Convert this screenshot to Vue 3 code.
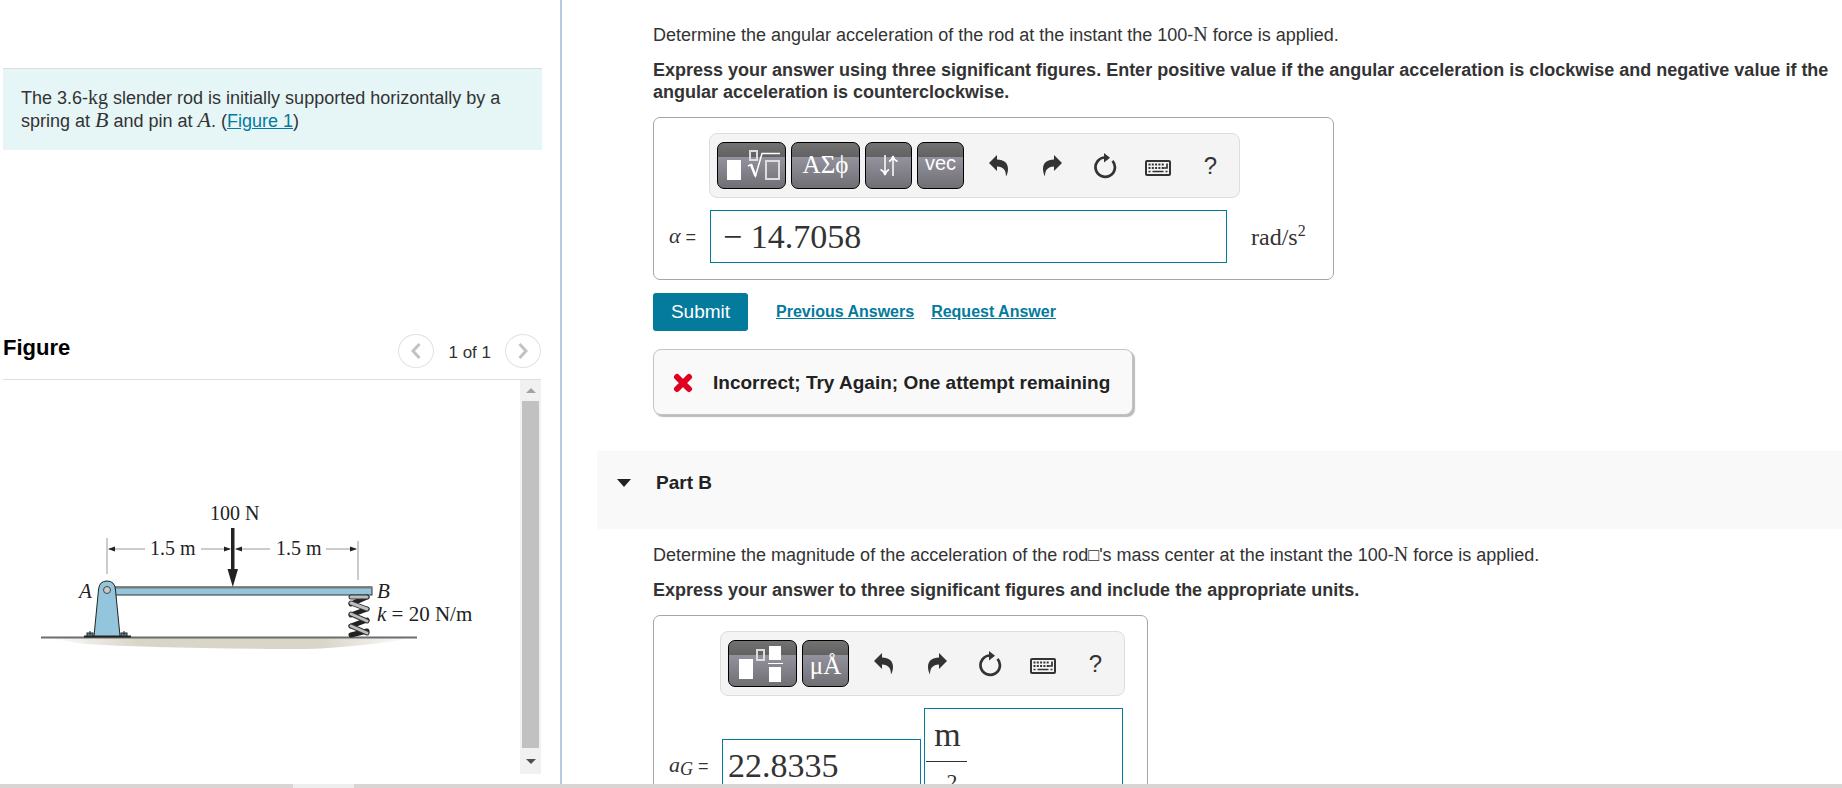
<template>
  <div class="page">
    <svg class="sprite" aria-hidden="true">
      <symbol id="icon-undo" viewBox="0 0 20 22">
        <path d="M0 8 L8 0 V4.500 C15 4.500 19 8 19 14 C19 17 18 19.500 17 21.500 C17 15 14.500 12 8 11.500 V16 Z" fill="currentColor" />
      </symbol>
      <symbol id="icon-redo" viewBox="0 0 20 22">
        <path d="M20 8 L12 0 V4.500 C5 4.500 1 8 1 14 C1 17 2 19.500 3 21.500 C3 15 5.500 12 12 11.500 V16 Z" fill="currentColor" />
      </symbol>
      <symbol id="icon-reset" viewBox="0 0 24 26">
        <path d="M12 4.500 A9.700 9.700 0 1 0 19.500 7.800" fill="none" stroke="currentColor" stroke-width="2.700" />
        <path d="M11 0 L17 4.800 L11 9.600 Z" fill="currentColor" />
      </symbol>
      <symbol id="icon-keyboard" viewBox="0 0 26 16">
        <rect x="1" y="1" width="24" height="14" rx="1" fill="none" stroke="currentColor" stroke-width="2" />
        <path d="M3.500 4.500H20M3.500 8H19" fill="none" stroke="currentColor" stroke-width="2" stroke-dasharray="2 1.300" />
        <path d="M3.500 11.500H5.500M7.500 11.500H18.500M20.500 11.500H22.500M17.500 8H22V3.500" fill="none" stroke="currentColor" stroke-width="1.700" />
      </symbol>
    </svg>

    <div class="panes">
      <aside class="left-pane">
        <section class="intro">
          <p class="problem">
            The 3.6-<span class="math unit">kg</span> slender rod is initially supported horizontally by a
            spring at <i class="math">B</i> and pin at <i class="math">A</i>. (<a href="#figure">Figure 1</a>)
          </p>
        </section>

        <section id="figure" class="figure-panel">
          <header class="figure-header">
            <h2>Figure</h2>
            <div class="pager">
              <button class="pager-btn" aria-label="Previous figure">
                <svg width="10" height="18" viewBox="0 0 10 18"><path d="M8.500 2 L2 9 L8.500 16" /></svg>
              </button>
              <span class="pager-text">1 of 1</span>
              <button class="pager-btn" aria-label="Next figure">
                <svg width="10" height="18" viewBox="0 0 10 18"><path d="M1.500 2 L8 9 L1.500 16" /></svg>
              </button>
            </div>
          </header>

          <div class="figure-view">
            <div class="figure-canvas">
              <svg class="diagram" width="480" height="160" viewBox="20 500 480 160">
                <defs>
                  <linearGradient id="soil" x1="0" x2="1" y1="0" y2="0">
                    <stop offset="0" stop-color="#d9d5c8" stop-opacity="0" />
                    <stop offset="0.250" stop-color="#d9d5c8" />
                    <stop offset="0.750" stop-color="#d9d5c8" />
                    <stop offset="1" stop-color="#d9d5c8" stop-opacity="0" />
                  </linearGradient>
                </defs>
                <path d="M45 637 H415 Q340 649 285 648 Q150 647 85 643 Z" fill="url(#soil)" />
                <path d="M41 636.500 H417" stroke="#6d6d6d" stroke-width="2" />

                <rect x="107" y="586" width="265" height="8" fill="#93c5dd" stroke="#333" />
                <path d="M107 586.500 H372" stroke="#777" stroke-width="2" />

                <g fill="#5f8ea6" stroke="#222">
                  <path d="M84 635.500 H131" stroke-width="2" />
                  <rect x="87" y="632" width="6" height="3" />
                  <rect x="121" y="632" width="6" height="3" />
                  <path d="M90 630 V634 M124 630 V634" />
                </g>
                <path d="M94 635 L98.500 589 Q99 580 107 580 Q115 580 115.500 589 L120 635 Z" fill="#93c5dd" stroke="#222" />
                <circle cx="107" cy="589" r="3.500" fill="#c9c9c9" stroke="#444" />

                <g stroke-linecap="round" stroke-linejoin="round" fill="none">
                  <path d="M367 596 L351 603 M367 608 L351 614 M367 619 L351 625 M367 630 L351 634" stroke="#222" stroke-width="5" />
                  <path d="M351 596 H367" stroke="#333" stroke-width="5" />
                  <path d="M351 596 H367" stroke="#bdbdbd" stroke-width="3" />
                  <path d="M351 602 L367 608 M351 613 L367 620 M351 625 L367 632" stroke="#333" stroke-width="5" />
                  <path d="M351 602 L367 608 M351 613 L367 620 M351 625 L367 632" stroke="#bdbdbd" stroke-width="3" />
                </g>

                <g stroke="#999" fill="none">
                  <path d="M107 537 V573 M358 540 V579" />
                  <path d="M109 548 H145 M201 548 H230 M236 548 H270 M326 548 H356" />
                </g>
                <g fill="#222">
                  <path d="M108 548 L115 545.500 V550.500 Z M231 548 L224 545.500 V550.500 Z M235 548 L242 545.500 V550.500 Z M357 548 L350 545.500 V550.500 Z" />
                  <path d="M231 527 H234.500 V568 H238 L232.800 586 L227.500 568 H231 Z" />
                </g>

                <g class="diagram-text">
                  <text x="210" y="519">100 N</text>
                  <text x="150" y="554">1.5 m</text>
                  <text x="276" y="554">1.5 m</text>
                  <g class="diagram-symbols">
                    <text x="79" y="597" font-style="italic">A</text>
                    <text x="377" y="597" font-style="italic">B</text>
                    <text x="377" y="620"><tspan font-style="italic">k</tspan> = 20 N/m</text>
                  </g>
                </g>
              </svg>
            </div>
            <div class="scrollbar">
              <button class="scroll-btn up" aria-label="Scroll up"></button>
              <div class="scroll-thumb"></div>
              <button class="scroll-btn down" aria-label="Scroll down"></button>
            </div>
          </div>
        </section>
      </aside>

      <main class="right-pane">
        <section class="part">
          <p class="question">Determine the angular acceleration of the rod at the instant the 100-<span class="math unit">N</span> force is applied.</p>
          <p class="instructions">
            Express your answer using three significant figures. Enter positive value if the angular acceleration is
            clockwise and negative value if the angular acceleration is counterclockwise.
          </p>

          <div class="answer-box answer-a">
            <div class="toolbar">
              <div class="templates">
                <button class="tool wide" aria-label="Templates">
                  <svg width="56" height="34" viewBox="0 0 56 34">
                    <rect x="3" y="11" width="14" height="20" fill="#fff" />
                    <g fill="none" stroke="#fff">
                      <rect x="26" y="2" width="7" height="9" stroke="#ddd" stroke-width="2" />
                      <path d="M24 17 L27 15.500 L31.500 27 L38 4.500 H56" stroke-width="1.500" />
                      <path d="M27 15.500 L31.500 27" stroke-width="2.500" />
                      <rect x="42" y="12" width="13" height="18" stroke="#ddd" stroke-width="2" />
                    </g>
                  </svg>
                </button>
                <button class="tool wide greek">ΑΣϕ</button>
                <button class="tool" aria-label="Arrows">
                  <svg width="18" height="24" viewBox="0 0 18 24">
                    <path d="M5 1 V21 M0.500 15.500 Q4 17 5 21 Q6 17 9 15.500 M13 22 V2 M9 7.500 Q12 6 13 2 Q14 6 17.500 7.500" fill="none" stroke="#fff" stroke-width="1.500" />
                  </svg>
                </button>
                <button class="tool vec">vec</button>
              </div>
              <button v-for="a in actions" :key="a.icon" class="action" :class="a.icon" :aria-label="a.label">
                <svg :width="a.width" :height="a.height"><use :href="'#icon-' + a.icon" /></svg>
              </button>
              <button class="action help" aria-label="Help">?</button>
            </div>
            <div class="answer-row">
              <label class="answer-label" for="alpha"><i class="math">α</i> =</label>
              <input id="alpha" v-model="alpha" class="answer-input" type="text" />
              <span class="answer-unit math">rad/s<sup>2</sup></span>
            </div>
          </div>

          <div class="submit-row">
            <button class="btn-submit">Submit</button>
            <a href="#previous">Previous Answers</a>
            <a href="#request">Request Answer</a>
          </div>

          <div class="feedback" role="status">
            <svg width="20" height="20" viewBox="0 0 20 20">
              <path d="M4 4 L16 16 M16 4 L4 16" stroke="#e0001f" stroke-width="6" stroke-linecap="round" />
            </svg>
            <span>Incorrect; Try Again; One attempt remaining</span>
          </div>
        </section>

        <header class="part-header">
          <button class="caret" aria-label="Collapse Part B"></button>
          <h2>Part B</h2>
        </header>

        <section class="part part-b">
          <p class="question">Determine the magnitude of the acceleration of the rod<span class="tofu">□</span>'s mass center at the instant the 100-<span class="math unit">N</span> force is applied.</p>
          <p class="instructions">Express your answer to three significant figures and include the appropriate units.</p>

          <div class="answer-box answer-b">
            <div class="toolbar">
              <div class="templates">
                <button class="tool wide" aria-label="Templates">
                  <svg width="54" height="38" viewBox="0 0 54 38">
                    <g fill="#fff">
                      <rect x="3" y="14" width="14" height="20" />
                      <rect x="33" y="1" width="12" height="14" />
                      <rect x="32" y="18" width="15" height="1" />
                      <rect x="33" y="22" width="12" height="15" />
                    </g>
                    <rect x="21" y="5" width="7" height="10" fill="none" stroke="#ddd" stroke-width="2" />
                  </svg>
                </button>
                <button class="tool units">μÅ</button>
              </div>
              <button v-for="a in actions" :key="a.icon" class="action" :class="a.icon" :aria-label="a.label">
                <svg :width="a.width" :height="a.height"><use :href="'#icon-' + a.icon" /></svg>
              </button>
              <button class="action help" aria-label="Help">?</button>
            </div>
            <div class="answer-row">
              <label class="answer-label" for="accel"><i class="math">a<sub>G</sub></i> =</label>
              <input id="accel" v-model="accel" class="answer-input" type="text" />
              <div class="unit-box">
                <input v-model="unitTop" class="unit-top" type="text" aria-label="Unit numerator" />
                <div class="unit-bottom">
                  <input v-model="unitBottom" class="unit-base" type="text" aria-label="Unit denominator" />
                  <input v-model="unitPower" class="unit-power" type="text" aria-label="Unit exponent" />
                </div>
              </div>
            </div>
          </div>
        </section>
      </main>
    </div>

    <footer class="bottom-strip"><div class="bottom-tab"></div></footer>
  </div>
</template>

<script setup>
import { ref } from 'vue'

const alpha = ref('− 14.7058')
const accel = ref('22.8335')
const unitTop = ref('m')
const unitBottom = ref('s')
const unitPower = ref('2')

const actions = [
  { icon: 'undo', label: 'Undo', width: 20, height: 22 },
  { icon: 'redo', label: 'Redo', width: 20, height: 22 },
  { icon: 'reset', label: 'Reset', width: 24, height: 26 },
  { icon: 'keyboard', label: 'Keyboard shortcuts', width: 26, height: 16 }
]
</script>

<style>
body {
  margin: 0;
  background: #fff;
}
</style>

<style scoped>
.page {
  display: flex;
  flex-direction: column;
  height: 100vh;
  overflow: hidden;
  font-family: "Liberation Sans", Arial, sans-serif;
  font-size: 18px;
  line-height: 22px;
  color: #333;
}

.page * {
  box-sizing: border-box;
}

.sprite {
  position: absolute;
  width: 0;
  height: 0;
}

button {
  font-family: inherit;
  padding: 0;
  border: none;
  background: none;
  color: inherit;
  cursor: pointer;
}

p,
h2 {
  margin: 0;
}

a {
  color: #047a9c;
}

.math {
  font-family: "Liberation Serif", "Times New Roman", serif;
  font-size: 20px;
  line-height: 20px;
}

i.math {
  font-size: 22px;
}

.panes {
  flex: 1;
  display: flex;
  min-height: 0;
}

.left-pane {
  flex: none;
  width: 562px;
  display: flex;
  flex-direction: column;
  border-right: 2px solid #b8cadf;
  padding-left: 3px;
}

.intro {
  height: 325px;
  padding: 68px 18px 0 0;
}

.problem {
  padding: 18px 17px 17px 18px;
  line-height: 23px;
  background: #e6f6f7;
  border-top: 1px solid #ddd;
}

.figure-panel {
  flex: 1;
  min-height: 0;
  display: flex;
  flex-direction: column;
  margin: 0 19px 10px 0;
}

.figure-header {
  display: flex;
  justify-content: space-between;
  height: 55px;
  padding-top: 9px;
  border-bottom: 1px solid #ddd;
}

.figure-header h2 {
  font-size: 22px;
  line-height: 28px;
  color: #000;
}

.pager {
  display: flex;
  gap: 14px;
}

.pager-btn {
  display: flex;
  align-items: center;
  justify-content: center;
  width: 36px;
  height: 34px;
  border: 1px solid #e2e2e2;
  border-radius: 50%;
}

.pager-btn path {
  fill: none;
  stroke: #c2c2c2;
  stroke-width: 3;
}

.pager-text {
  font-size: 17px;
  line-height: 38px;
}

.figure-view {
  flex: 1;
  min-height: 0;
  display: flex;
}

.figure-canvas {
  flex: 1;
  overflow: hidden;
  padding: 121px 0 0 17px;
}

.diagram {
  display: block;
}

.diagram-text {
  font-family: "Liberation Serif", "Times New Roman", serif;
  font-size: 20px;
  fill: #222;
}

.diagram-symbols {
  font-size: 21px;
}

.scrollbar {
  width: 21px;
  display: flex;
  flex-direction: column;
  align-items: center;
  background: #f1f1f1;
}

.scroll-thumb {
  flex: 1;
  width: 17px;
  background: #c1c1c1;
}

.scroll-btn {
  display: flex;
  align-items: center;
  justify-content: center;
  width: 21px;
  height: 21px;
}

.scroll-btn::before {
  content: "";
  border: 5px solid transparent;
  border-top-width: 0;
  border-bottom: 5px solid #a3a3a3;
}

.scroll-btn.down {
  height: 26px;
}

.scroll-btn.down::before {
  border-top: 5px solid #505050;
  border-bottom-width: 0;
}

.right-pane {
  flex: 1;
  min-width: 0;
  overflow: hidden;
}

.part {
  padding: 24px 8px 0 91px;
}

.part-b {
  padding-top: 15px;
}

.instructions {
  margin: 13px 0 14px;
  font-weight: bold;
}

.tofu {
  font-size: 18px;
  line-height: 16px;
}

.answer-box {
  border: 1px solid #a6a6a6;
  border-radius: 7px;
  padding: 15px 0 16px 15px;
}

.answer-a {
  width: 681px;
}

.answer-b {
  width: 495px;
}

.toolbar {
  display: flex;
  align-items: center;
  height: 65px;
  padding-left: 7px;
  background: #f4f4f4;
  border: 1px solid #ddd;
  border-radius: 8px;
}

.answer-a .toolbar {
  width: 531px;
  margin-left: 40px;
}

.answer-b .toolbar {
  width: 405px;
  margin-left: 51px;
}

.templates {
  display: flex;
  gap: 5px;
  margin-right: 8px;
}

.tool {
  display: flex;
  align-items: center;
  justify-content: center;
  width: 47px;
  height: 47px;
  border: 1px solid #000;
  border-radius: 7px;
  color: #fff;
  background: linear-gradient(#727272, #626262 30%, #94929d 31%, #706f74);
}

.tool.wide {
  width: 69px;
}

.greek,
.units {
  font-family: "Liberation Serif", "Times New Roman", serif;
  font-size: 25px;
}

.units {
  padding-top: 4px;
}

.greek {
  padding-bottom: 2px;
}

.vec {
  font-size: 20px;
  padding-bottom: 4px;
}

.action {
  display: flex;
  align-items: center;
  justify-content: center;
  width: 53px;
  height: 47px;
}

.action.keyboard {
  padding-top: 5px;
}

.help {
  font-size: 24px;
}

.answer-row {
  display: flex;
  align-items: flex-end;
  margin-top: 12px;
}

.answer-label {
  width: 41px;
  line-height: 52px;
  font-size: 18px;
}

.answer-b .answer-label {
  width: 53px;
}

.answer-label sub {
  font-size: 18px;
  line-height: 0;
  vertical-align: -3px;
}

.answer-input {
  width: 517px;
  height: 53px;
  padding: 0 12px;
  border: 1px solid #047a9c;
  font-family: "Liberation Serif", "Times New Roman", serif;
  font-size: 34px;
  color: #333;
}

.answer-b .answer-input {
  width: 199px;
  padding: 0 5px;
}

.answer-unit {
  align-self: center;
  margin-left: 24px;
  font-size: 24px;
}

.answer-unit sup {
  font-size: 16px;
  line-height: 0;
}

.unit-box {
  width: 199px;
  height: 116px;
  margin: 0 0 -32px 3px;
  padding: 3px 1px;
  border: 1px solid #047a9c;
}

.unit-box input {
  padding: 0;
  border: none;
  background: none;
  text-align: center;
  font-family: "Liberation Serif", "Times New Roman", serif;
  font-size: 34px;
  color: #333;
}

.unit-box .unit-top {
  display: block;
  width: 41px;
  height: 50px;
  padding: 0 0 4px 2px;
  border-bottom: 1px solid #333;
}

.unit-bottom {
  display: flex;
  padding: 8px 0 0 6px;
}

.unit-box .unit-base {
  width: 14px;
  height: 48px;
}

.unit-box .unit-power {
  width: 12px;
  height: 24px;
  font-size: 22px;
}

.submit-row {
  display: flex;
  align-items: center;
  margin-top: 13px;
}

.submit-row a {
  margin-right: 17px;
  font-size: 16px;
  font-weight: bold;
}

.btn-submit {
  width: 95px;
  height: 38px;
  margin-right: 28px;
  border-radius: 3px;
  background: #047a9c;
  color: #fff;
  font-size: 19px;
}

.feedback {
  display: flex;
  align-items: center;
  gap: 20px;
  width: fit-content;
  height: 66px;
  margin-top: 18px;
  padding: 2px 22px 0 19px;
  border: 1px solid #c4c4c4;
  border-radius: 8px;
  background: #f9f9f9;
  box-shadow: 2px 2px 1px #bbb;
  font-size: 19px;
  font-weight: bold;
  color: #222;
}

.part-header {
  display: flex;
  align-items: flex-start;
  gap: 25px;
  height: 78px;
  margin: 36px 0 0 35px;
  padding: 21px 20px;
  background: #f9f9f9;
}

.part-header h2 {
  font-size: 19px;
  color: #222;
}

.caret {
  border: 7px solid transparent;
  border-top: 8px solid #222;
  border-bottom-width: 0;
  margin-top: 7px;
}

.bottom-strip {
  flex: none;
  height: 4px;
  padding-left: 293px;
  background: #d8d5d4;
}

.bottom-tab {
  width: 61px;
  height: 4px;
  background: #eee;
}
</style>
